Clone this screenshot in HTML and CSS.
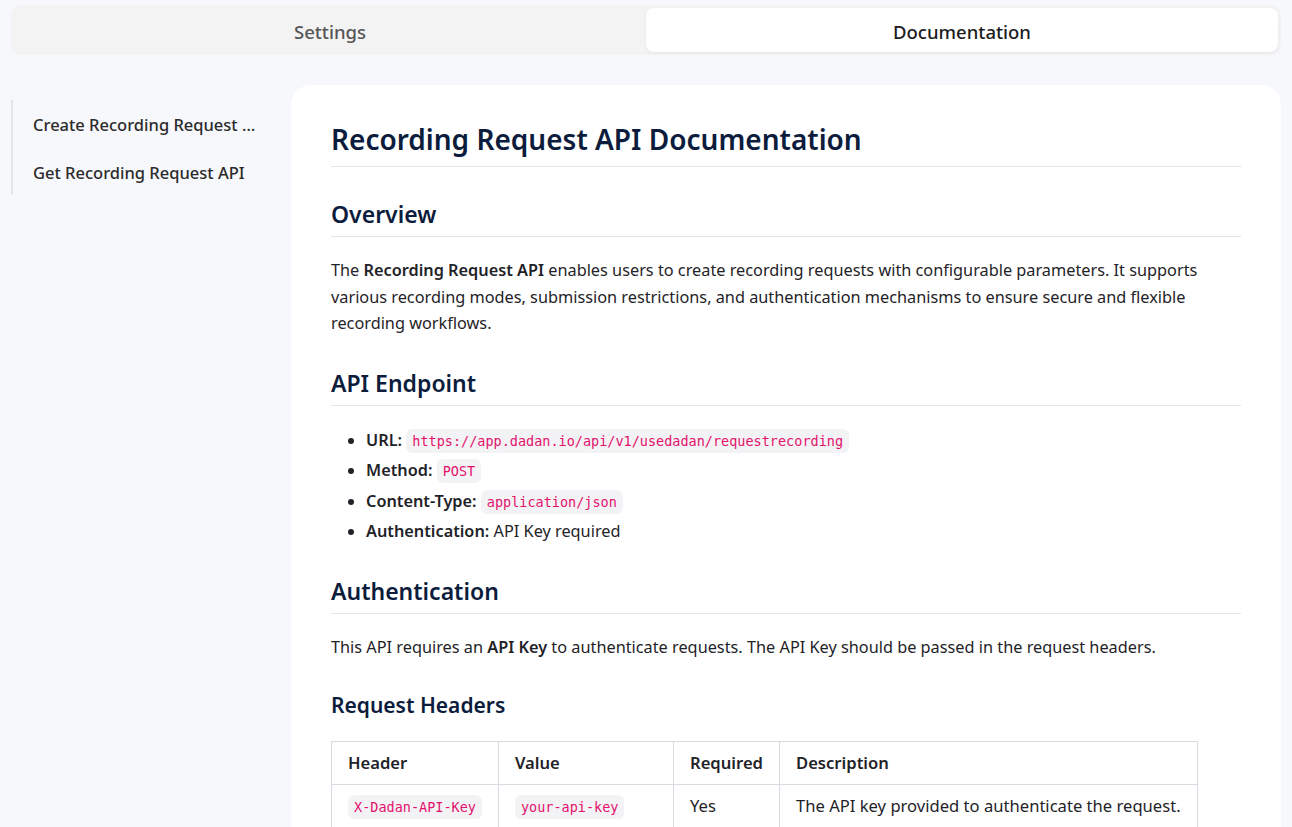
FILE: index.html
```html
<!DOCTYPE html>
<html lang="en">
<head>
  <meta charset="UTF-8" />
  <title>Recording Request API Documentation</title>
  <link rel="stylesheet" href="styles.css">
</head>
<body>

<div class="tabs">
  <button class="tab">Settings</button>
  <button class="tab active">Documentation</button>
</div>

<div class="layout">
  <nav class="side-nav">
    <a class="nav-item" href="#create">Create Recording Request API</a>
    <a class="nav-item" href="#get">Get Recording Request API</a>
  </nav>

  <main class="doc">
    <h1>Recording Request API Documentation</h1>

    <h2>Overview</h2>
    <p>The <strong>Recording Request API</strong> enables users to create recording requests with configurable parameters. It supports various recording modes, submission restrictions, and authentication mechanisms to ensure secure and flexible recording workflows.</p>

    <h2>API Endpoint</h2>
    <ul>
      <li><strong>URL:</strong> <code>https://app.dadan.io/api/v1/usedadan/requestrecording</code></li>
      <li><strong>Method:</strong> <code>POST</code></li>
      <li><strong>Content-Type:</strong> <code>application/json</code></li>
      <li><strong>Authentication:</strong> API Key required</li>
    </ul>

    <h2>Authentication</h2>
    <p>This API requires an <strong>API Key</strong> to authenticate requests. The API Key should be passed in the request headers.</p>

    <h3>Request Headers</h3>
    <table>
      <thead>
        <tr><th>Header</th><th>Value</th><th>Required</th><th>Description</th></tr>
      </thead>
      <tbody>
        <tr>
          <td><code>X-Dadan-API-Key</code></td>
          <td><code>your-api-key</code></td>
          <td>Yes</td>
          <td>The API key provided to authenticate the request.</td>
        </tr>
        <tr>
          <td><code>Content-Type</code></td>
          <td><code>application/json</code></td>
          <td>Yes</td>
          <td>Specifies the request body format.</td>
        </tr>
      </tbody>
    </table>
  </main>
</div>

</body>
</html>
```

FILE: styles.css
```css
body {
  margin: 0;
  font-family: "Noto Sans", "Open Sans", sans-serif;
  background: #f7f8fc;
  color: #1f2328;
  height: 827px;
  overflow: hidden;
}
.tabs {
  display: flex;
  margin: 5px 11px 0;
  padding: 3px;
  background: #f3f3f4;
  border-radius: 10px;
  height: 44px;
}
.tab {
  flex: 1;
  border: none;
  background: none;
  font-family: inherit;
  font-size: 18.5px;
  font-weight: 500;
  color: #555;
  border-radius: 8px;
  padding-top: 4px;
  cursor: pointer;
}
.tab.active {
  background: #fff;
  color: #1c1c1c;
  box-shadow: 0 1px 3px #0000000f;
}
.layout {
  display: flex;
  gap: 28px;
  padding: 30px 11px 0;
}
.side-nav {
  width: 230px;
  flex-shrink: 0;
  align-self: flex-start;
  border-left: 2px solid #e4e4e7;
  margin-top: 15px;
  padding: 13px 0 10px 20px;
  display: flex;
  flex-direction: column;
  gap: 25px;
}
.nav-item {
  color: #2b2b2b;
  font-size: 16.5px;
  font-weight: 500;
  text-decoration: none;
  white-space: nowrap;
  overflow: hidden;
  text-overflow: ellipsis;
}
.doc {
  flex: 1;
  background: #fff;
  border-radius: 20px;
  padding: 23px 40px 40px;
  min-height: 800px;
}
h1, h2, h3 {
  color: #0c1c3c;
  font-weight: 600;
  margin: 0;
}
h1 {
  font-size: 28px;
  padding: 12px 0 8px;
  border-bottom: 1px solid #e3e4e8;
}
h2 {
  font-size: 23px;
  margin-top: 30px;
  padding-bottom: 6px;
  border-bottom: 1px solid #e3e4e8;
}
h1 + h2 {
  margin-top: 31px;
}
ul + h2 {
  margin-top: 28px;
}
h3 {
  font-size: 21px;
  margin-top: 31px;
}
p {
  font-size: 16.3px;
  line-height: 26.5px;
  margin: 20px 0 0;
}
strong {
  font-weight: 600;
}
ul {
  margin: 19px 0 0;
  padding-left: 35px;
  font-size: 16.3px;
}
li {
  line-height: 30.5px;
}
code {
  font-family: "DejaVu Sans Mono", monospace;
  font-size: 13.5px;
  line-height: 1;
  color: #e3116c;
  background: #f3f3f5;
  padding: 4px 6px;
  border-radius: 6px;
}
table {
  border-collapse: collapse;
  margin-top: 22px;
  font-size: 16.6px;
  line-height: 1.3;
}
th, td {
  border: 1px solid #d8dce2;
  padding: 0 16px;
  height: 42px;
  text-align: left;
}
th {
  font-weight: 600;
}
```
